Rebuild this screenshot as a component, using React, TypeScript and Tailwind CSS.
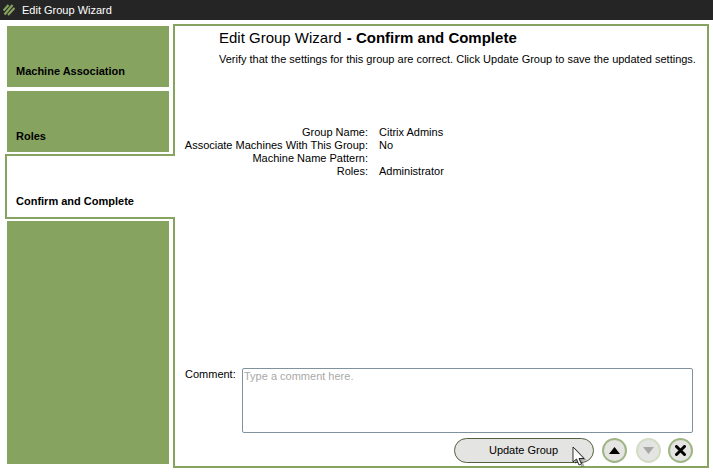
import React from "react";

const rows = [
  ["Group Name:", "Citrix Admins"],
  ["Associate Machines With This Group:", "No"],
  ["Machine Name Pattern:", ""],
  ["Roles:", "Administrator"],
];

function RoundButton({ children, muted }: { children: React.ReactNode; muted?: boolean }) {
  return (
    <button
      className={`w-[25px] h-[25px] rounded-full border-2 flex items-center justify-center bg-[#e4e4e2] ${
        muted ? "border-[#d3dcc5]" : "border-[#9fb585]"
      }`}
    >
      {children}
    </button>
  );
}

export default function App() {
  return (
    <div className="w-[713px] h-[473px] bg-white overflow-hidden font-['Liberation_Sans',Arial,sans-serif] text-[11px] text-black">
      <div className="h-5 bg-[#252525] flex items-center pl-[3px] gap-[7px]">
        <svg width="12" height="12" viewBox="0 0 12 12" fill="none" stroke="#87a360" strokeWidth="2.2">
          <path d="M0.5 6.5 L5.5 1 M1.5 10.5 L9.5 1 M5 11 L11.5 4" />
        </svg>
        <span className="text-white text-[11px]">Edit Group Wizard</span>
      </div>

      <div className="flex pt-1 pr-1">
        <div className="w-[175px] shrink-0 pt-0.5 relative z-10 flex flex-col">
          <div className="ml-[7px] w-[162px] h-[61px] bg-[#87a360] flex items-end pl-[9px] pb-[8px] font-bold">
            Machine Association
          </div>
          <div className="ml-[7px] mt-1 w-[162px] h-[61px] bg-[#87a360] flex items-end pl-[9px] pb-[8px] font-bold">
            Roles
          </div>
          <div className="ml-[5px] mt-0.5 h-[65px] bg-white border-2 border-r-0 border-[#87a360] flex items-end pl-[9px] pb-[8px] font-bold">
            Confirm and Complete
          </div>
          <div className="ml-[7px] mt-0.5 w-[162px] h-[243px] bg-[#87a360]" />
        </div>

        <div className="relative -ml-0.5 w-[536px] h-[444px] border-2 border-[#87a360] flex flex-col">
          <div className="pl-11 pt-[2px]">
            <h1 className="text-[15px] leading-[20px]">
              Edit Group Wizard <span className="font-bold ml-[1px]">- Confirm and Complete</span>
            </h1>
            <p className="mt-[4px] leading-[14px]">
              Verify that the settings for this group are correct. Click Update Group to save the updated settings.
            </p>
          </div>

          <div className="mt-[60px] flex flex-col">
            {rows.map(([label, value]) => (
              <div key={label} className="flex leading-[13px]">
                <div className="w-[193px] text-right">{label}</div>
                <div className="ml-[11px]">{value}</div>
              </div>
            ))}
          </div>

          <div className="mt-auto pl-2.5 flex items-start">
            <span className="w-[57px] leading-[13px]">Comment:</span>
            <textarea
              placeholder="Type a comment here."
              className="w-[451px] h-[65px] border border-[#7f929e] rounded-[2px] px-[1px] py-[1px] text-[11px] leading-[13px] placeholder:text-[#a9a9a9] resize-none outline-none"
            />
          </div>

          <div className="mt-[5px] mb-[3px] pr-[14px] flex justify-end items-center gap-2">
            <button className="w-[140px] h-[25px] rounded-full border border-[#55603f] bg-[#e4e4e2] text-[11px] pr-[1px]">
              Update Group
            </button>
            <RoundButton>
              <svg width="11" height="7" viewBox="0 0 11 7"><path d="M5.5 0 L11 7 H0 Z" fill="#000" /></svg>
            </RoundButton>
            <div className="-mr-[1px] ml-[1px]">
              <RoundButton muted>
                <svg width="11" height="7" viewBox="0 0 11 7"><path d="M0 0 H11 L5.5 7 Z" fill="#a8a8a8" /></svg>
              </RoundButton>
            </div>
            <RoundButton>
              <svg width="11" height="11" viewBox="0 0 11 11" stroke="#000" strokeWidth="3" strokeLinecap="round"><path d="M1.5 1.5 L9.5 9.5 M9.5 1.5 L1.5 9.5" /></svg>
            </RoundButton>
          </div>

          <svg className="absolute left-[397px] top-[420px]" width="18" height="22" viewBox="0 0 18 22">
            <path d="M3 2 L3 18 L7 15 L9.5 21 L12.5 20 L10 14.5 L15 14.5 Z" fill="#000" fillOpacity="0.3" />
            <path d="M1 1 L1 16 L4.5 13 L7 19 L9.5 18 L7 12.5 L12 12.5 Z" fill="#fff" stroke="#000" strokeWidth="0.8" />
          </svg>
        </div>
      </div>
    </div>
  );
}
